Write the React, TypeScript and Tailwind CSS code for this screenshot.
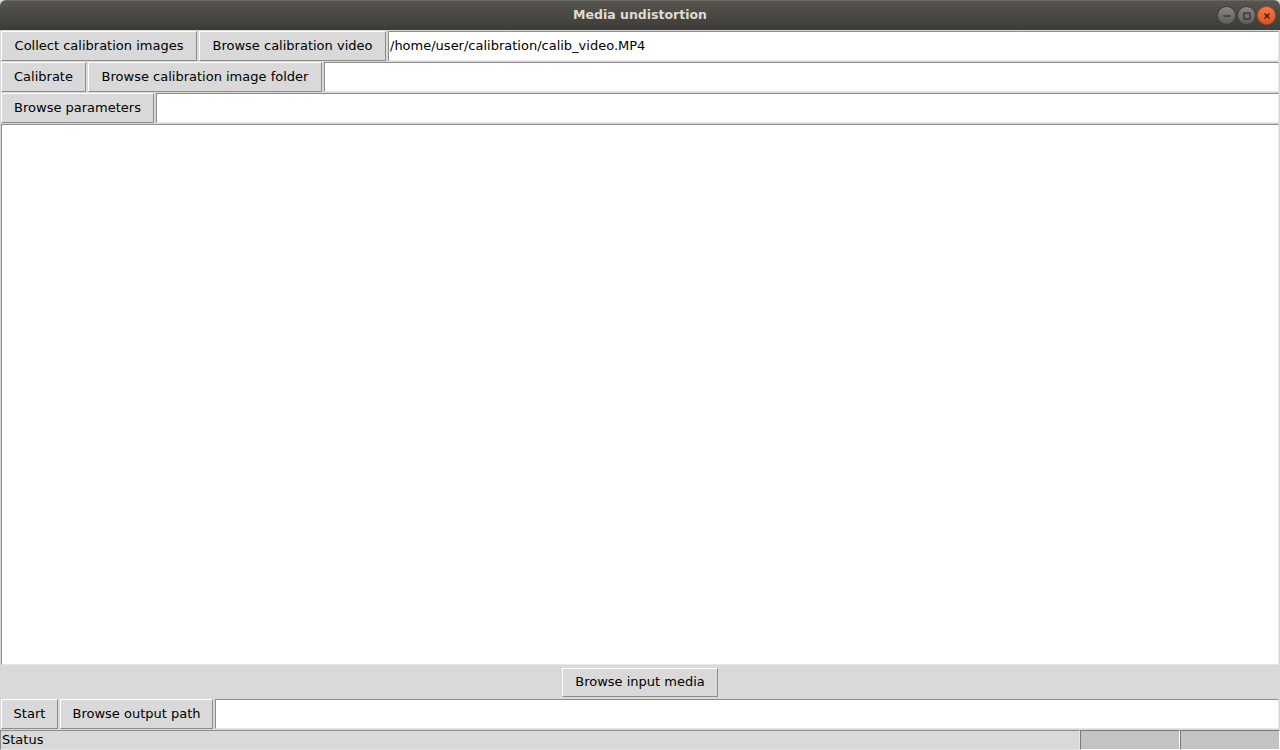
import React from 'react';

const font = { fontFamily: '"DejaVu Sans", sans-serif' };

const TkButton: React.FC<{ label: string; width: string }> = ({ label, width }) => (
  <button
    className={`${width} h-full shrink-0 border border-t-white border-l-white border-b-[#8c8c8c] border-r-[#8c8c8c] bg-[#d9d9d9] text-[13px] text-black`}
  >
    {label}
  </button>
);

const TkEntry: React.FC<{ value?: string }> = ({ value = '' }) => (
  <div className="h-full min-w-0 flex-1 border border-t-[#8c8c8c] border-l-[#8c8c8c] border-b-[#e6e6e6] border-r-[#e6e6e6] bg-white px-[1px] flex items-center text-[13px] text-black">
    {value}
  </div>
);

const WinButton: React.FC<{ kind: 'min' | 'max' | 'close' }> = ({ kind }) => (
  <div
    className={`flex h-[19px] w-[19px] items-center justify-center rounded-full border ${
      kind === 'close'
        ? 'border-[#b8461d] bg-gradient-to-b from-[#f47a4a] to-[#e0501e]'
        : 'border-[#3f3e3a] bg-gradient-to-b from-[#8a8884] to-[#5f5d58]'
    }`}
  >
    <svg width="10" height="10" viewBox="0 0 10 10">
      {kind === 'min' && <line x1="1.5" y1="5" x2="8.5" y2="5" stroke="#2f2e2b" strokeWidth="1.3" />}
      {kind === 'max' && <rect x="2" y="2" width="6" height="6" fill="none" stroke="#2f2e2b" strokeWidth="1.2" />}
      {kind === 'close' && (
        <path d="M2.5 2.5 L7.5 7.5 M7.5 2.5 L2.5 7.5" stroke="#3a1a0c" strokeWidth="1.3" />
      )}
    </svg>
  </div>
);

export default function App() {
  return (
    <div className="flex h-[750px] w-[1280px] flex-col overflow-hidden bg-[#d9d9d9]" style={font}>
      <div className="relative flex h-[30px] shrink-0 items-center justify-center rounded-t-[6px] border-t border-[#6b6862] bg-gradient-to-b from-[#57554f] to-[#3c3b37]">
        <span className="text-[12.5px] font-bold text-[#dfdbd2]">Media undistortion</span>
        <div className="absolute right-[4px] top-[5px] flex gap-[1px]">
          <WinButton kind="min" />
          <WinButton kind="max" />
          <WinButton kind="close" />
        </div>
      </div>

      <div className="flex h-[31px] shrink-0 gap-[2px] px-[1px] pt-[1px]">
        <TkButton label="Collect calibration images" width="w-[196px]" />
        <TkButton label="Browse calibration video" width="w-[187px]" />
        <TkEntry value="/home/user/calibration/calib_video.MP4" />
      </div>
      <div className="flex h-[31px] shrink-0 gap-[2px] px-[1px] pt-[1px]">
        <TkButton label="Calibrate" width="w-[85px]" />
        <TkButton label="Browse calibration image folder" width="w-[234px]" />
        <TkEntry />
      </div>
      <div className="flex h-[31px] shrink-0 gap-[2px] px-[1px] pt-[1px]">
        <TkButton label="Browse parameters" width="w-[153px]" />
        <TkEntry />
      </div>

      <div className="mx-[1px] mt-[1px] h-[541px] shrink-0 border border-t-[#8c8c8c] border-l-[#8c8c8c] border-b-[#e6e6e6] border-r-[#e6e6e6] bg-white" />

      <div className="flex h-[34px] shrink-0 items-center justify-center">
        <TkButton label="Browse input media" width="w-[156px] !h-[29px]" />
      </div>

      <div className="flex h-[30px] shrink-0 gap-[2px] px-[1px]">
        <TkButton label="Start" width="w-[57px]" />
        <TkButton label="Browse output path" width="w-[153px]" />
        <TkEntry />
      </div>

      <div className="flex h-[21px] shrink-0 pt-[1px]">
        <div className="flex flex-1 items-center border border-t-[#8c8c8c] border-l-[#8c8c8c] border-b-[#e6e6e6] border-r-[#e6e6e6] pl-[1px] text-[13px] text-black">
          Status
        </div>
        <div className="w-[100px] border border-t-[#7a7a7a] border-l-[#7a7a7a] border-b-white border-r-white bg-[#c3c3c3]" />
        <div className="w-[100px] border border-t-[#7a7a7a] border-l-[#7a7a7a] border-b-white border-r-white bg-[#c3c3c3]" />
      </div>
    </div>
  );
}
